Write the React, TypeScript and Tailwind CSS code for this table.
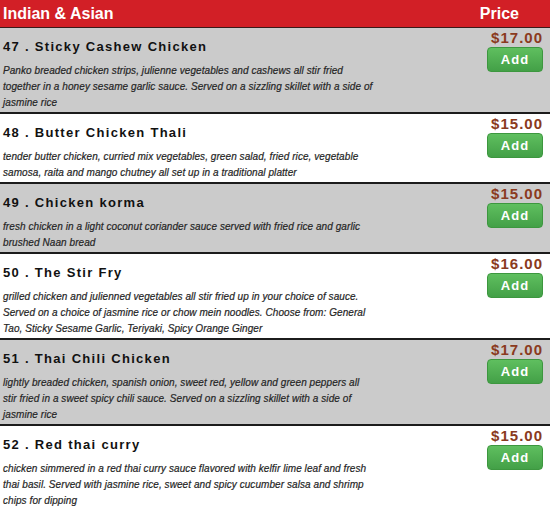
import React from "react";

type Item = { n: number; name: string; desc: string; price: string };

const items: Item[] = [
  {
    n: 47,
    name: "Sticky Cashew Chicken",
    desc: "Panko breaded chicken strips, julienne vegetables and cashews all stir fried together in a honey sesame garlic sauce. Served on a sizzling skillet with a side of jasmine rice",
    price: "$17.00",
  },
  {
    n: 48,
    name: "Butter Chicken Thali",
    desc: "tender butter chicken, curried mix vegetables, green salad, fried rice, vegetable samosa, raita and mango chutney all set up in a traditional platter",
    price: "$15.00",
  },
  {
    n: 49,
    name: "Chicken korma",
    desc: "fresh chicken in a light coconut coriander sauce served with fried rice and garlic brushed Naan bread",
    price: "$15.00",
  },
  {
    n: 50,
    name: "The Stir Fry",
    desc: "grilled chicken and julienned vegetables all stir fried up in your choice of sauce. Served on a choice of jasmine rice or chow mein noodles. Choose from: General Tao, Sticky Sesame Garlic, Teriyaki, Spicy Orange Ginger",
    price: "$16.00",
  },
  {
    n: 51,
    name: "Thai Chili Chicken",
    desc: "lightly breaded chicken, spanish onion, sweet red, yellow and green peppers all stir\u00a0fried in a sweet spicy chili sauce. Served on a sizzling skillet with a side of jasmine rice",
    price: "$17.00",
  },
  {
    n: 52,
    name: "Red thai curry",
    desc: "chicken simmered in a red thai curry sauce flavored with kelfir lime leaf and fresh thai basil. Served with jasmine rice, sweet and spicy cucumber salsa and shrimp chips for dipping",
    price: "$15.00",
  },
];

export default function App() {
  return (
    <div
      className="w-[550px] h-[507px] overflow-hidden bg-white"
      style={{ fontFamily: '"Liberation Sans", Arial, sans-serif' }}
    >
      <div className="flex h-[28px] items-center bg-[#d21f26] border-b border-[#3a1a1a] text-white font-bold text-[16px] leading-none">
        <div className="flex-1 pl-[3px]">Indian &amp; Asian</div>
        <div className="w-[100px] pr-[31px] text-right">Price</div>
      </div>
      {items.map((it, i) => (
        <div
          key={it.n}
          className={`flex border-b-2 border-[#1c1c1c] ${i % 2 === 0 ? "bg-[#cbcbcb]" : "bg-white"}`}
        >
          <div className="flex-1 pl-[3px] pt-[10px] pb-[1px]">
            <div className="text-[13px] leading-[18px] font-bold tracking-[1.3px] text-[#111] mb-[7px]">
              {it.n} . {it.name}
            </div>
            <div className="w-[375px] text-[10px] leading-[16px] italic tracking-[0.07px] text-[#262626] [-webkit-text-stroke:0.2px_#262626]">
              {it.desc}
            </div>
          </div>
          <div className="w-[80px] flex flex-col items-end pr-[7px] pt-[1px]">
            <div className="text-[15px] leading-[18px] font-bold tracking-[1px] text-[#8a3a20]">
              {it.price}
            </div>
            <div className="w-[56px] h-[25px] rounded-[4px] bg-gradient-to-b from-[#5fbf5f] to-[#43a047] border border-[#3d973f] flex items-center justify-center text-white font-bold text-[13px] tracking-[1px]">
              Add
            </div>
          </div>
        </div>
      ))}
    </div>
  );
}
